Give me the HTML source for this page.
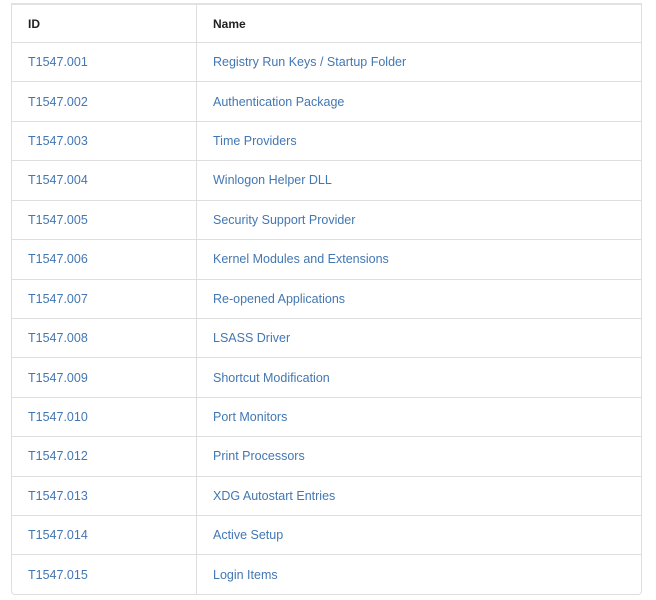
<!DOCTYPE html>
<html><head><style>
body{margin:0;background:#fff;font-family:"Liberation Sans",Arial,sans-serif;}
.t{position:absolute;left:11px;top:3px;width:629px;border:1px solid #dedede;border-top:2px solid #e2e2e2;border-radius:0 0 4px 4px;}
.r{display:flex;height:39.43px;border-top:1px solid #dedede;box-sizing:border-box;font-size:12.5px;color:#4277b3;}
.r:first-child{border-top:none;height:37px;color:#222;font-weight:bold;font-size:12px;}
.a{width:185px;border-right:1px solid #dedede;padding-left:16px;box-sizing:border-box;display:flex;align-items:center;}
.b{padding-left:16px;display:flex;align-items:center;}
</style></head><body>
<div class="t">
<div class="r"><div class="a">ID</div><div class="b">Name</div></div>
<div class="r"><div class="a">T1547.001</div><div class="b">Registry Run Keys / Startup Folder</div></div>
<div class="r"><div class="a">T1547.002</div><div class="b">Authentication Package</div></div>
<div class="r"><div class="a">T1547.003</div><div class="b">Time Providers</div></div>
<div class="r"><div class="a">T1547.004</div><div class="b">Winlogon Helper DLL</div></div>
<div class="r"><div class="a">T1547.005</div><div class="b">Security Support Provider</div></div>
<div class="r"><div class="a">T1547.006</div><div class="b">Kernel Modules and Extensions</div></div>
<div class="r"><div class="a">T1547.007</div><div class="b">Re-opened Applications</div></div>
<div class="r"><div class="a">T1547.008</div><div class="b">LSASS Driver</div></div>
<div class="r"><div class="a">T1547.009</div><div class="b">Shortcut Modification</div></div>
<div class="r"><div class="a">T1547.010</div><div class="b">Port Monitors</div></div>
<div class="r"><div class="a">T1547.012</div><div class="b">Print Processors</div></div>
<div class="r"><div class="a">T1547.013</div><div class="b">XDG Autostart Entries</div></div>
<div class="r"><div class="a">T1547.014</div><div class="b">Active Setup</div></div>
<div class="r"><div class="a">T1547.015</div><div class="b">Login Items</div></div>
</div>
</body></html>
